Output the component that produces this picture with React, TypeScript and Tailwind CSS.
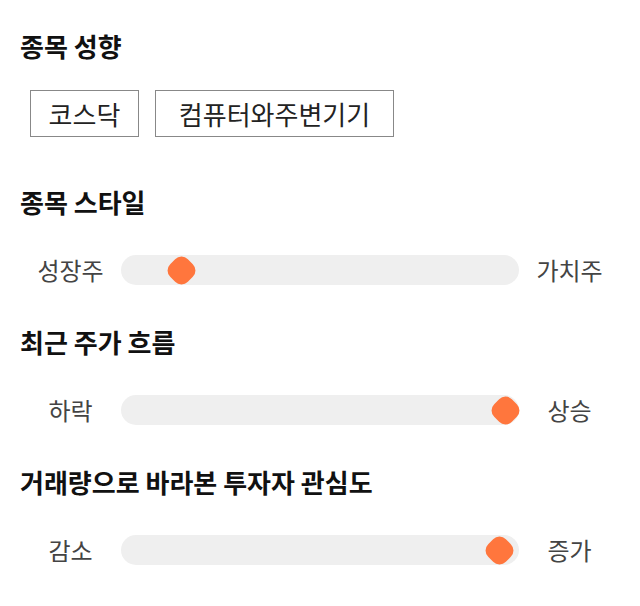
const SLIDERS = [
  { title: '종목 스타일', left: '성장주', right: '가치주', value: 0.127 },
  { title: '최근 주가 흐름', left: '하락', right: '상승', value: 1 },
  { title: '거래량으로 바라본 투자자 관심도', left: '감소', right: '증가', value: 0.986 },
];

const TAGS = [
  { label: '코스닥', width: 'w-[109px]' },
  { label: '컴퓨터와주변기기', width: 'w-[239px]' },
];

function Slider({ left, right, value }: { left: string; right: string; value: number }) {
  return (
    <div className="flex items-center h-[30px]">
      <div className="w-[101px] text-center text-[24px] leading-[30px] text-[#444]">{left}</div>
      <div className="relative flex-1 h-[30px] rounded-full bg-[#efefef]">
        <div
          className="absolute top-[1px] w-[28px] h-[29px] flex items-center justify-center"
          style={{ left: `${value * 370}px` }}
        >
          <div className="w-[25px] h-[25px] rounded-[9px] rotate-45 bg-[#ff763d]" />
        </div>
      </div>
      <div className="w-[101px] text-center text-[24px] leading-[30px] text-[#444]">{right}</div>
    </div>
  );
}

export default function App() {
  return (
    <div
      className="w-[640px] h-[606px] bg-white px-5 pt-[28px]"
      style={{ fontFamily: '"Noto Sans CJK KR", "Noto Sans", sans-serif' }}
    >
      <h2 className="text-[26px] leading-[36px] font-bold text-[#111]">종목 성향</h2>
      <div className="flex gap-4 pl-[10px] mt-[26px]">
        {TAGS.map(t => (
          <div
            key={t.label}
            className={`${t.width} h-[47px] border border-[#888] flex items-center justify-center text-[26px] text-[#222]`}
          >
            {t.label}
          </div>
        ))}
      </div>
      <div className="mt-[47px] flex flex-col gap-[39px]">
        {SLIDERS.map(s => (
          <div key={s.title} className="flex flex-col gap-[35px]">
            <h2 className="text-[26px] leading-[36px] font-bold text-[#111]">{s.title}</h2>
            <Slider left={s.left} right={s.right} value={s.value} />
          </div>
        ))}
      </div>
    </div>
  );
}
